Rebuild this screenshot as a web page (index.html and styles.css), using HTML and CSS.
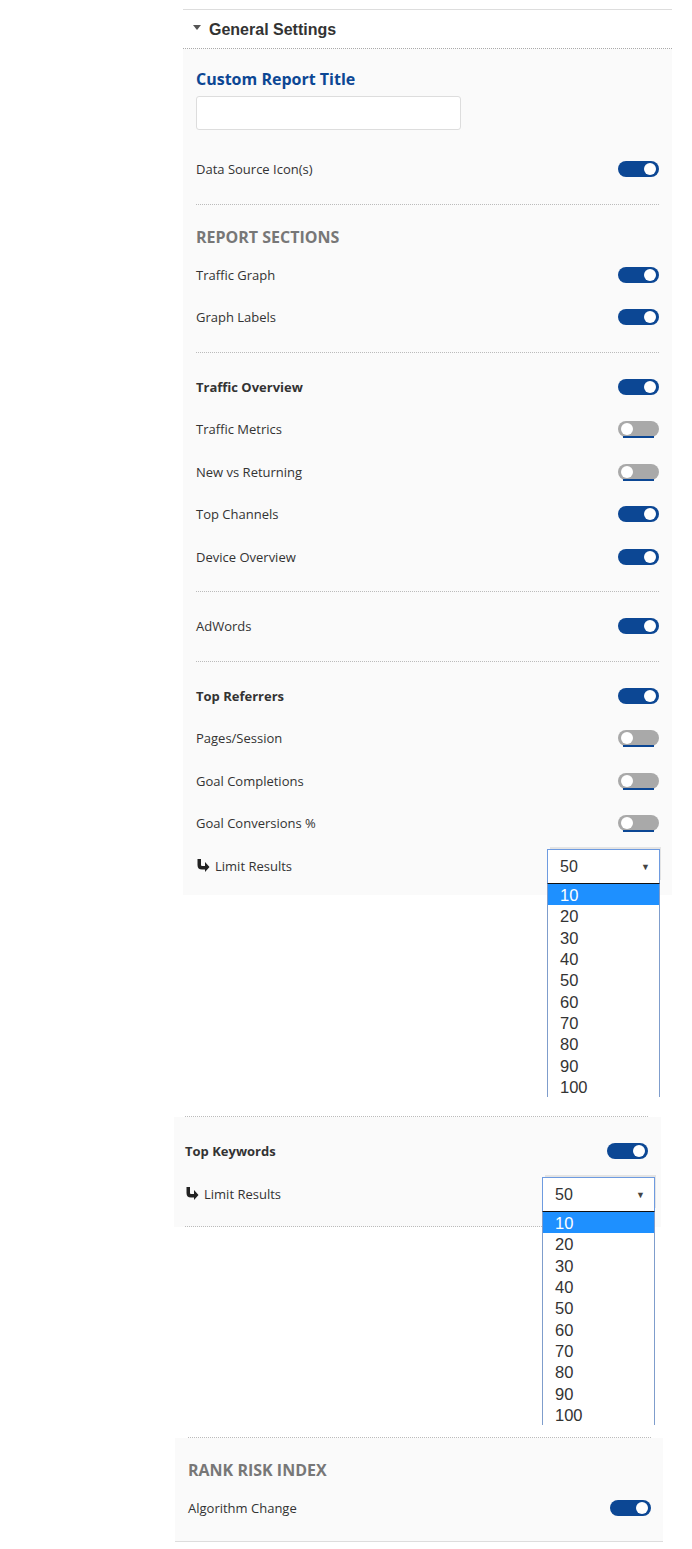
FILE: index.html
```html
<!DOCTYPE html>
<html lang="en">
<head>
  <meta charset="UTF-8">
  <meta name="viewport" content="width=device-width, initial-scale=1.0">
  <title>Report Settings</title>
  <link rel="stylesheet" href="styles.css">
</head>
<body>
  <div class="panel">
    <div class="panel-head">
      <span class="caret"></span>
      <span class="head-title">General Settings</span>
    </div>
    <div class="panel-body">
      <div class="group first">
        <div class="title">Custom Report Title</div>
        <input type="text" class="title-input">
        <div class="row row-gap">
          <span>Data Source Icon(s)</span>
          <span class="toggle on"></span>
        </div>
      </div>

      <div class="group">
        <div class="heading">REPORT SECTIONS</div>
        <div class="row"><span>Traffic Graph</span><span class="toggle on"></span></div>
        <div class="row"><span>Graph Labels</span><span class="toggle on"></span></div>
      </div>

      <div class="group">
        <div class="row"><span class="bold">Traffic Overview</span><span class="toggle on"></span></div>
        <div class="row"><span>Traffic Metrics</span><span class="toggle"></span></div>
        <div class="row"><span>New vs Returning</span><span class="toggle"></span></div>
        <div class="row"><span>Top Channels</span><span class="toggle on"></span></div>
        <div class="row"><span>Device Overview</span><span class="toggle on"></span></div>
      </div>

      <div class="group">
        <div class="row"><span>AdWords</span><span class="toggle on"></span></div>
      </div>

      <div class="group last">
        <div class="row"><span class="bold">Top Referrers</span><span class="toggle on"></span></div>
        <div class="row"><span>Pages/Session</span><span class="toggle"></span></div>
        <div class="row"><span>Goal Completions</span><span class="toggle"></span></div>
        <div class="row"><span>Goal Conversions %</span><span class="toggle"></span></div>
        <div class="row">
          <span class="limit">
            <svg width="13" height="13" viewBox="0 0 13 13"><path d="M0.5 0h3.5v6q0 1 1 1h3V3l4.5 5-4.5 5V10.5H5Q0.5 10.5 0.5 6z" fill="#222"/></svg>
            Limit Results
          </span>
          <div class="select sel-a">
            <span class="sel-value">50</span><span class="sel-arrow">&#9660;</span>
            <ul class="options">
              <li class="hl">10</li><li>20</li><li>30</li><li>40</li><li>50</li>
              <li>60</li><li>70</li><li>80</li><li>90</li><li>100</li>
            </ul>
          </div>
        </div>
      </div>
    </div>
  </div>

  <div class="sect sect-kw">
    <div class="sect-rule"></div>
    <div class="sect-body">
      <div class="group">
        <div class="row"><span class="bold">Top Keywords</span><span class="toggle on"></span></div>
        <div class="row">
          <span class="limit">
            <svg width="13" height="13" viewBox="0 0 13 13"><path d="M0.5 0h3.5v6q0 1 1 1h3V3l4.5 5-4.5 5V10.5H5Q0.5 10.5 0.5 6z" fill="#222"/></svg>
            Limit Results
          </span>
          <div class="select sel-b">
            <span class="sel-value">50</span><span class="sel-arrow">&#9660;</span>
            <ul class="options">
              <li class="hl">10</li><li>20</li><li>30</li><li>40</li><li>50</li>
              <li>60</li><li>70</li><li>80</li><li>90</li><li>100</li>
            </ul>
          </div>
        </div>
      </div>
    </div>
  </div>

  <div class="sect sect-rank">
    <div class="sect-rule"></div>
    <div class="sect-body">
      <div class="heading">RANK RISK INDEX</div>
      <div class="row"><span>Algorithm Change</span><span class="toggle on"></span></div>
    </div>
  </div>
</body>
</html>
```

FILE: styles.css
```css
body {
  margin: 0;
  padding: 0;
  background: #fff;
  font-family: "Open Sans", Arial, sans-serif;
  font-size: 13px;
  color: #333;
}

.panel {
  margin: 9px 0 0 183px;
  width: 489px;
  border-top: 1px solid #ddd;
}

.panel-head {
  height: 38px;
  display: flex;
  align-items: center;
  padding-left: 10px;
  border-bottom: 1px dotted #aaa;
  background: #fff;
}

.caret {
  width: 0;
  height: 0;
  border-left: 4px solid transparent;
  border-right: 4px solid transparent;
  border-top: 5px solid #555;
  margin: -3px 8px 0 0;
}

.head-title {
  font-family: Arial, "Liberation Sans", sans-serif;
  font-weight: bold;
  font-size: 16px;
  color: #333;
  padding-top: 1px;
}

.panel-body {
  background: #fafafa;
  padding: 0 13px 8px;
}

.group {
  padding: 13px 0;
  border-bottom: 1px dotted #bbb;
}
.group.first {
  padding-top: 19px;
}
.group.last {
  border-bottom: none;
  padding-bottom: 0;
}

.title {
  font-weight: bold;
  font-size: 16px;
  line-height: 22px;
  color: #0c4794;
  margin-bottom: 6px;
}

.title-input {
  display: block;
  width: 265px;
  height: 34px;
  box-sizing: border-box;
  border: 1px solid #ddd;
  border-radius: 3px;
  background: #fff;
  margin: 0;
}

.heading {
  font-weight: bold;
  font-size: 16px;
  line-height: 22px;
  color: #777;
  margin: 8px 0 6px;
}

.row {
  height: 42.5px;
  display: flex;
  align-items: center;
  justify-content: space-between;
}
.row-gap {
  margin-top: 18px;
}

.bold {
  font-weight: bold;
}

.toggle {
  position: relative;
  width: 41px;
  height: 16px;
  border-radius: 8px;
  background: #a9a9a9;
}
.toggle::before {
  content: "";
  position: absolute;
  top: 2px;
  left: 3px;
  width: 12px;
  height: 12px;
  border-radius: 50%;
  background: #fff;
}
.toggle::after {
  content: "";
  position: absolute;
  left: 5px;
  right: 5px;
  bottom: -1px;
  height: 2px;
  background: #0c4794;
}
.toggle.on {
  background: #0c4794;
}
.toggle.on::before {
  left: auto;
  right: 3px;
}
.toggle.on::after {
  display: none;
}

.limit {
  display: flex;
  align-items: center;
  gap: 5px;
  padding-left: 1px;
}

.select {
  position: relative;
  width: 113px;
  height: 35px;
  margin-top: 1px;
  box-sizing: border-box;
  border: 1px solid #6e9be0;
  background: #fff;
  display: flex;
  align-items: center;
  justify-content: space-between;
  padding: 2px 9px 0 12px;
  font-family: Arial, "Liberation Sans", sans-serif;
  font-size: 16px;
  color: #333;
  box-shadow: 2px -3px 0 -1px #e4e4e4;
}
.sel-a {
  margin-right: -1px;
}
.sel-b {
  margin-right: -7px;
}

.sel-arrow {
  font-size: 9px;
  color: #444;
}

.options {
  position: absolute;
  top: 100%;
  left: -1px;
  width: 113px;
  height: 214px;
  box-sizing: border-box;
  margin: 0;
  padding: 0;
  list-style: none;
  overflow: hidden;
  background: #fff;
  border: 1px solid #7f9dcc;
  border-top: 1px solid #111;
  border-bottom: none;
  z-index: 2;
}
.options li {
  height: 21.4px;
  line-height: 23px;
  padding-left: 12px;
  font-size: 16.5px;
  color: #333;
}
.options li.hl {
  background: #1e90ff;
  color: #fff;
}

.sect-rule {
  border-top: 1px dotted #bbb;
}

.sect-body {
  background: #fafafa;
}

.sect-kw {
  margin: 221px 0 0 174px;
  width: 487px;
}
.sect-kw .sect-rule {
  margin: 0 13px 0 11px;
}
.sect-kw .sect-body {
  padding: 0 13px 0 11px;
}
.sect-kw .group {
  padding: 13px 0 11px;
}

.sect-rank {
  margin: 210px 0 0 175px;
  width: 488px;
}
.sect-rank .sect-rule {
  margin: 0 12px 0 13px;
}
.sect-rank .sect-body {
  padding: 13px 12px 11px 13px;
  border-bottom: 1px solid #ddd;
}
```
